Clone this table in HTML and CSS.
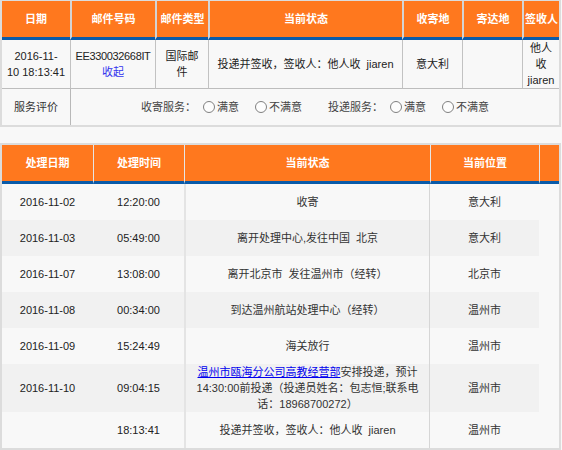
FILE: index.html
```html
<!DOCTYPE html>
<html lang="zh-CN">
<head>
<meta charset="utf-8">
<title>邮件查询</title>
<link rel="stylesheet" href="styles.css">
</head>
<body>
<table class="mail">
  <colgroup>
    <col class="w68"><col class="w85"><col class="w53"><col class="w194"><col class="w60"><col class="w60"><col class="w37">
  </colgroup>
  <thead>
    <tr><th>日期</th><th>邮件号码</th><th>邮件类型</th><th>当前状态</th><th>收寄地</th><th>寄达地</th><th>签收人</th></tr>
  </thead>
  <tbody>
    <tr class="info">
      <td>2016-11-<br>10 18:13:41</td>
      <td><span class="code">EE330032668IT</span><br><a class="toggle" href="#">收起</a></td>
      <td>国际邮<br>件</td>
      <td>投递并签收，签收人：他人收&nbsp; jiaren</td>
      <td>意大利</td>
      <td></td>
      <td>他人<br>收<br>jiaren</td>
    </tr>
    <tr class="rate">
      <td>服务评价</td>
      <td colspan="6">
        <div class="rating">
          <span class="label">收寄服务：</span>
          <span class="opt"><span class="radio"></span>满意</span>
          <span class="opt"><span class="radio"></span>不满意</span>
          <span class="label second">投递服务：</span>
          <span class="opt"><span class="radio"></span>满意</span>
          <span class="opt"><span class="radio"></span>不满意</span>
        </div>
      </td>
    </tr>
  </tbody>
</table>

<table class="track">
  <colgroup>
    <col class="w91"><col class="w91"><col class="w246"><col class="w109"><col class="w20">
  </colgroup>
  <thead>
    <tr><th>处理日期</th><th>处理时间</th><th>当前状态</th><th>当前位置</th><th></th></tr>
  </thead>
  <tbody>
    <tr><td>2016-11-02</td><td>12:20:00</td><td class="status">收寄</td><td class="place">意大利</td><td class="blank"></td></tr>
    <tr><td>2016-11-03</td><td>05:49:00</td><td class="status">离开处理中心,发往中国&nbsp; 北京</td><td class="place">意大利</td><td class="blank"></td></tr>
    <tr><td>2016-11-07</td><td>13:08:00</td><td class="status">离开北京市&nbsp; 发往温州市（经转）</td><td class="place">北京市</td><td class="blank"></td></tr>
    <tr><td>2016-11-08</td><td>00:34:00</td><td class="status">到达温州航站处理中心（经转）</td><td class="place">温州市</td><td class="blank"></td></tr>
    <tr><td>2016-11-09</td><td>15:24:49</td><td class="status">海关放行</td><td class="place">温州市</td><td class="blank"></td></tr>
    <tr><td>2016-11-10</td><td>09:04:15</td><td class="status"><a class="link" href="#">温州市瓯海分公司高教经营部</a>安排投递，预计<br>14:30:00前投递（投递员姓名：包志恒;联系电<br>话：18968700272）</td><td class="place">温州市</td><td class="blank"></td></tr>
    <tr><td></td><td>18:13:41</td><td class="status">投递并签收，签收人：他人收&nbsp; jiaren</td><td class="place">温州市</td><td class="blank"></td></tr>
  </tbody>
</table>
</body>
</html>
```

FILE: styles.css
```css
body {
  margin: 0;
  background: #f8f8f8;
  font: 11px/16px "Liberation Sans", "Noto Sans CJK SC", sans-serif;
  color: #333;
}

table {
  border-collapse: separate;
  border-spacing: 0;
  table-layout: fixed;
  width: 561px;
}

.w68 { width: 68px; }
.w85 { width: 85px; }
.w53 { width: 53px; }
.w194 { width: 194px; }
.w60 { width: 60px; }
.w37 { width: 37px; }
.w91 { width: 91px; }
.w246 { width: 246px; }
.w109 { width: 109px; }
.w20 { width: 20px; }

th {
  background: #ff781e;
  color: #fff;
  font-weight: bold;
  height: 36px;
  padding: 0;
  text-align: center;
  vertical-align: middle;
  border-bottom: 3px solid #0b5ba9;
  white-space: nowrap;
}

td {
  padding: 0;
  text-align: center;
  vertical-align: middle;
}

/* top table */
.mail {
  border: 2px solid #dcdcdc;
  border-top-width: 1px;
}

.mail th + th {
  border-left: 2px solid #d4d4d4;
}

.mail .info td {
  height: 48px;
  border-bottom: 1px solid #bdbdbd;
  color: #222;
}

.mail .info td + td {
  border-left: 1px solid #c2c2c2;
}

.code {
  letter-spacing: -0.35px;
}

.mail .rate td {
  height: 36px;
}

.mail .rate td + td {
  border-left: 1px solid #b8b8b8;
}

.toggle {
  color: #3333ee;
  text-decoration: none;
}

.rating {
  display: flex;
  justify-content: center;
  align-items: center;
  color: #444;
}

.label {
  margin-right: 7px;
}

.label.second {
  margin-left: 10px;
}

.opt {
  display: inline-flex;
  align-items: center;
  margin-right: 16px;
}

.opt:last-child {
  margin-right: 0;
}

.radio {
  display: inline-block;
  width: 10px;
  height: 10px;
  border: 1px solid #808080;
  border-radius: 50%;
  background: #fdfdfd;
  margin-right: 2px;
}

/* bottom table */
.track {
  margin-top: 16px;
  border: 2px solid #dcdcdc;
}

.track th + th {
  border-left: 1px solid #e6e6e6;
}

.track td {
  height: 36px;
  color: #222;
}

.track tbody tr:nth-child(even) td {
  background: #f1f1f1;
}

.track tbody tr td.blank {
  background: #f8f8f8;
}

.track .status {
  border-left: 2px solid #e4e4e4;
  border-right: 1px solid #d6d6d6;
  padding: 0 10px;
  color: #333;
}

.track .place {
  color: #333;
}

.link {
  color: #0000ee;
  text-decoration: underline;
}
```
